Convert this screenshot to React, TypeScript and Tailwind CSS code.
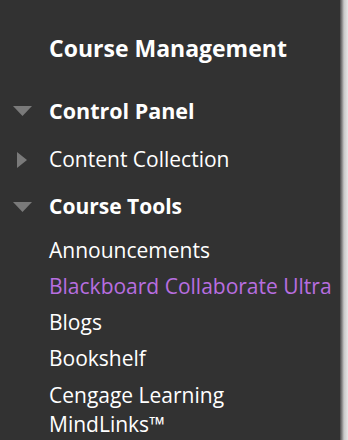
const tools = ['Announcements', 'Blackboard Collaborate Ultra', 'Blogs', 'Bookshelf', 'Cengage Learning MindLinks™'];

const DownArrow = () => (
  <svg width="19" height="10" viewBox="0 0 19 10" className="shrink-0">
    <polygon points="0,0 19,0 9.5,10" fill="#7a7a7a" />
  </svg>
);

const RightArrow = () => (
  <svg width="10" height="16" viewBox="0 0 10 16" className="shrink-0">
    <polygon points="0,0 10,8 0,16" fill="#7a7a7a" />
  </svg>
);

const App = () => {
  return (
    <div className="flex h-[440px] w-[348px] overflow-hidden" style={{ fontFamily: '"Open Sans", sans-serif' }}>
      <div className="w-[340px] bg-[#323232] text-white pt-[34px]">
        <div className="pl-[49px] text-[23px] font-bold leading-[28px]">Course Management</div>

        {/* Control Panel */}
        <div className="flex items-center mt-[35px] h-[28px]">
          <div className="w-[49px] pl-[13px] flex items-center"><DownArrow /></div>
          <span className="text-[21.5px] font-bold">Control Panel</span>
        </div>

        {/* Content Collection */}
        <div className="flex items-center mt-[21px] h-[28px]">
          <div className="w-[49px] pl-[17px] flex items-center"><RightArrow /></div>
          <span className="text-[21px]">Content Collection</span>
        </div>

        {/* Course Tools */}
        <div className="flex items-center mt-[19px] h-[28px]">
          <div className="w-[49px] pl-[13px] flex items-center"><DownArrow /></div>
          <span className="text-[21px] font-bold">Course Tools</span>
        </div>

        <ul className="pl-[49px] pr-2 mt-[15px] flex flex-col gap-[7px]">
          {tools.map((t, i) => (
            <li
              key={t}
              className={`text-[21px] leading-[29px] ${i === 1 ? 'text-[#b86ee0]' : 'text-white'} ${i === 4 ? 'w-[200px] mt-[1px]' : ''}`}
            >
              {t}
            </li>
          ))}
        </ul>
      </div>
      <div className="w-[8px] bg-gradient-to-r from-[#4a4a4a] via-[#c8c8c8] to-[#e6e6e6]" />
    </div>
  );
};

export default App;
